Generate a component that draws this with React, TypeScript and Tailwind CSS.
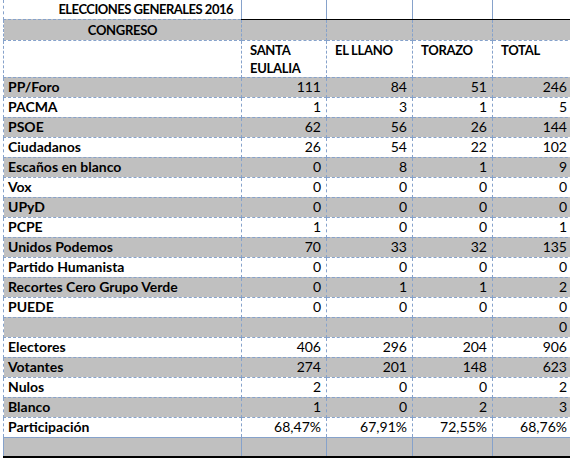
const rows: [string, string, string, string, string][] = [
  ["PP/Foro", "111", "84", "51", "246"],
  ["PACMA", "1", "3", "1", "5"],
  ["PSOE", "62", "56", "26", "144"],
  ["Ciudadanos", "26", "54", "22", "102"],
  ["Escaños en blanco", "0", "8", "1", "9"],
  ["Vox", "0", "0", "0", "0"],
  ["UPyD", "0", "0", "0", "0"],
  ["PCPE", "1", "0", "0", "1"],
  ["Unidos Podemos", "70", "33", "32", "135"],
  ["Partido Humanista", "0", "0", "0", "0"],
  ["Recortes Cero Grupo Verde", "0", "1", "1", "2"],
  ["PUEDE", "0", "0", "0", "0"],
  ["", "", "", "", "0"],
  ["Electores", "406", "296", "204", "906"],
  ["Votantes", "274", "201", "148", "623"],
  ["Nulos", "2", "0", "0", "2"],
  ["Blanco", "1", "0", "2", "3"],
  ["Participación", "68,47%", "67,91%", "72,55%", "68,76%"],
  ["", "", "", "", ""],
];

const cell = "border border-dashed border-[#86a2cb] p-0";
const topRight = `${cell} border-t-0 border-b-black border-b-[1.5px] border-solid`;
const head = `${cell} align-top pl-[8px] pt-0 leading-[18px] text-[13px] tracking-[-0.3px]`;

export default function App() {
  return (
    <div className="w-[570px] h-[459px] overflow-hidden bg-white text-black font-['Lato','Liberation_Sans',sans-serif] font-bold text-[14px]">
      <table className="ml-[3px] border-collapse table-fixed w-[569px]">
        <colgroup>
          <col className="w-[238px]" />
          <col className="w-[85px]" />
          <col className="w-[86px]" />
          <col className="w-[80px]" />
          <col className="w-[80px]" />
        </colgroup>
        <tbody>
          <tr className="h-[19px]">
            <td className={`${cell} border-t-0 text-right pr-2 leading-[18px] text-[13px] tracking-[-0.5px]`}>
              ELECCIONES GENERALES 2016
            </td>
            <td className={topRight} />
            <td className={topRight} />
            <td className={topRight} />
            <td className={topRight} />
          </tr>
          <tr className="h-[21px] bg-[#c0c0c0]">
            <td className={`${cell} text-center leading-[18px] text-[13px] tracking-[-0.3px]`}>CONGRESO</td>
            <td className={cell} />
            <td className={cell} />
            <td className={cell} />
            <td className={cell} />
          </tr>
          <tr className="h-[35px]">
            <td className={cell} />
            <td className={head}>
              SANTA
              <br />
              EULALIA
            </td>
            <td className={head}>EL LLANO</td>
            <td className={`${head} pl-[7px]`}>TORAZO</td>
            <td className={`${head} pl-[7px]`}>TOTAL</td>
          </tr>
          {rows.map((r, i) => {
            const last = i === rows.length - 1;
            return (
              <tr key={i} className={`h-[20px] ${i % 2 === 0 ? "bg-[#c0c0c0]" : ""}`}>
                {r.map((v, j) => (
                  <td
                    key={j}
                    className={`${cell} leading-[18px] ${j === 0 ? "pl-[4px] text-left" : "pr-[5px] text-right font-normal"} ${
                      last ? "border-b-2 border-b-black border-solid" : ""
                    }`}
                  >
                    {v}
                  </td>
                ))}
              </tr>
            );
          })}
        </tbody>
      </table>
    </div>
  );
}
